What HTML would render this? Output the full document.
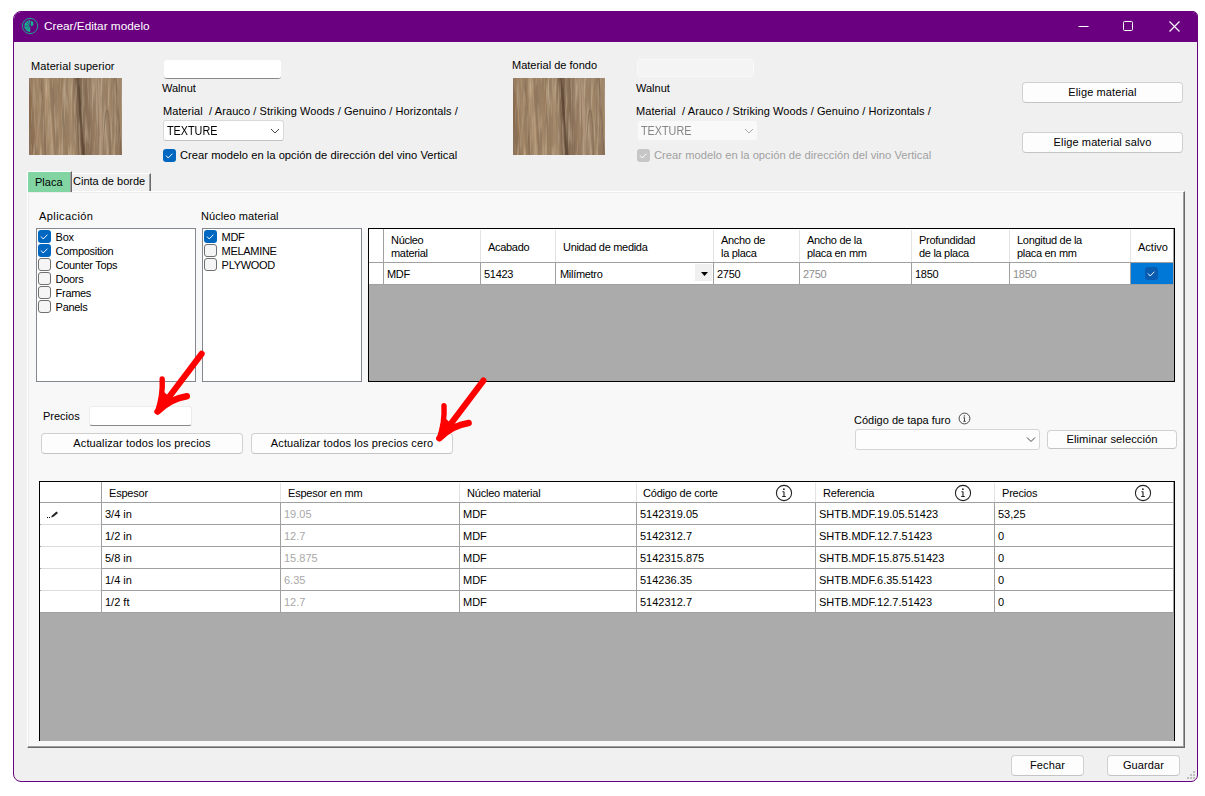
<!DOCTYPE html>
<html>
<head>
<meta charset="utf-8">
<title>Crear/Editar modelo</title>
<style>
*{box-sizing:border-box;margin:0;padding:0}
html,body{width:1205px;height:796px;overflow:hidden;background:#fff}
body{font-family:"Liberation Sans",sans-serif;font-size:11px;color:#000;position:relative}
.abs,.t,.btn,.cb,.grid,.cell,.hl,.vl{position:absolute}
.t{white-space:pre;line-height:13px;height:13px}
.g{color:#8e8e8e}
.dis{color:#a0a0a0}
.lst{letter-spacing:-.3px}
.grid .t{letter-spacing:-.3px}
.g2d .t{letter-spacing:-.2px}
.grid .t.d{letter-spacing:0}
.btn{letter-spacing:.12px}
.g2{color:#a8a8a8}
#win{position:absolute;left:13px;top:11px;width:1185px;height:771px;background:#f0f0f0;border:1px solid #6a0080;border-radius:8px 5px 7px 8px;overflow:hidden}
#title{position:absolute;left:0;top:0;width:1185px;height:30px;background:#6a0080}
#title .cap{position:absolute;left:30px;top:6px;font-size:11.8px;line-height:16px;color:#fff;white-space:pre}
.btn{background:#fdfdfd;border:1px solid #d0d0d0;border-bottom-color:#c4c4c4;border-radius:4px;text-align:center;white-space:pre;font-size:11px}
.cb{width:13px;height:13px;border-radius:3px}
.cb.on{background:#0067c0}
.cb.off{background:#f5f5f5;border:1px solid #707070}
.cb.dison{background:#c6c6c6}
.list{position:absolute;background:#fff;border:1px solid #828790}
.grid{background:#ababab;border:1px solid #000;overflow:hidden}
.cell{background:#fff}
.hl{height:1px;background:#a0a0a0}
.vl{width:1px;background:#a0a0a0}
.hvl{width:1px;background:#e3e3e3;position:absolute}
</style>
</head>
<body>
<svg width="0" height="0" style="position:absolute">
  <defs>
    <linearGradient id="wg" x1="-0.02" x2="0.98" y1="0" y2="0" gradientTransform="skewX(3.2)">
      <stop offset="0%" stop-color="#86664a"/>
      <stop offset="2.5%" stop-color="#8b6c4f"/>
      <stop offset="5%" stop-color="#9a7b5c"/>
      <stop offset="9%" stop-color="#a88a68"/>
      <stop offset="12.5%" stop-color="#9c7e5f"/>
      <stop offset="14.5%" stop-color="#856a50"/>
      <stop offset="16.5%" stop-color="#a08363"/>
      <stop offset="20%" stop-color="#ad9070"/>
      <stop offset="22.5%" stop-color="#b6997a"/>
      <stop offset="24.5%" stop-color="#957859"/>
      <stop offset="27%" stop-color="#8f7257"/>
      <stop offset="30%" stop-color="#a98c6b"/>
      <stop offset="33%" stop-color="#9e8162"/>
      <stop offset="37%" stop-color="#967a5c"/>
      <stop offset="41%" stop-color="#a3876a"/>
      <stop offset="45%" stop-color="#a78b6c"/>
      <stop offset="48.5%" stop-color="#957a5d"/>
      <stop offset="51%" stop-color="#846951"/>
      <stop offset="53.5%" stop-color="#6f5640"/>
      <stop offset="55.5%" stop-color="#634b38"/>
      <stop offset="57.5%" stop-color="#7a614a"/>
      <stop offset="60%" stop-color="#8b6f56"/>
      <stop offset="63%" stop-color="#806750"/>
      <stop offset="66%" stop-color="#94785d"/>
      <stop offset="70%" stop-color="#997d61"/>
      <stop offset="73%" stop-color="#a98e72"/>
      <stop offset="76.5%" stop-color="#b3987c"/>
      <stop offset="80%" stop-color="#a88d70"/>
      <stop offset="83%" stop-color="#9b8064"/>
      <stop offset="86.5%" stop-color="#a68b6d"/>
      <stop offset="90%" stop-color="#967b5f"/>
      <stop offset="93.5%" stop-color="#8f7459"/>
      <stop offset="95.5%" stop-color="#7f664e"/>
      <stop offset="97%" stop-color="#a58a6c"/>
      <stop offset="100%" stop-color="#a98e70"/>
    </linearGradient>
    <filter id="wf" x="0" y="0" width="100%" height="100%">
      <feTurbulence type="fractalNoise" baseFrequency="0.30 0.028" numOctaves="3" seed="7" result="n"/>
      <feColorMatrix in="n" type="matrix" values="0 0 0 0 0.27  0 0 0 0 0.19  0 0 0 0 0.12  1.6 0 0 0 -0.52"/>
    </filter>
    <filter id="wf2" x="0" y="0" width="100%" height="100%">
      <feTurbulence type="fractalNoise" baseFrequency="0.40 0.03" numOctaves="2" seed="21" result="n"/>
      <feColorMatrix in="n" type="matrix" values="0 0 0 0 0.80  0 0 0 0 0.68  0 0 0 0 0.50  0 1.2 0 0 -0.56"/>
    </filter>
    <symbol id="woodsym" viewBox="0 0 93 77" preserveAspectRatio="none">
      <rect width="93" height="77" fill="url(#wg)"/>
      <rect width="93" height="77" filter="url(#wf)"/>
      <rect width="93" height="77" filter="url(#wf2)"/>
      <path d="M48.5 0 C49.5 20 51 30 52 45 S53.5 68 54 77" stroke="#5a4433" stroke-width="2.2" fill="none" opacity=".55"/>
      <path d="M46.5 0 C47.5 25 49 40 50 77" stroke="#6a5340" stroke-width="1" fill="none" opacity=".4"/>
      <path d="M77.5 32 C75.5 42 74.5 58 75 77" stroke="#6f5945" stroke-width="1" fill="none" opacity=".55"/>
      <path d="M78.5 32 C80.5 42 81.5 58 81 77" stroke="#6f5945" stroke-width="1" fill="none" opacity=".45"/>
      <path d="M68.5 0 C69 25 69.5 50 70 77" stroke="#7a6350" stroke-width="1.2" fill="none" opacity=".4"/>
    </symbol>
  </defs>
</svg>
<div id="win">
  <div id="title">
    <svg class="abs" style="left:7px;top:5px" width="18" height="18" viewBox="0 0 18 18">
      <circle cx="9" cy="9" r="7.7" fill="#6a0080" stroke="#1ea28e" stroke-width="1"/>
      <path d="M9.2 9 L9.2 3 A6 6 0 0 0 9.2 15 Z" fill="#10b48f"/>
      <path d="M9.2 9 L4.6 4.4 M9.2 9 L3 9 M9.2 9 L4.8 13.6 M9.2 9 L7 3" stroke="#6a0080" stroke-width=".55" fill="none"/>
      <path d="M9.9 8.6 L9.9 3.8 L12.6 4.9 L11.8 6.2 L13 7.2 L11.8 7.8 L12.4 9 L10.8 8.6 L10.4 9.8 Z" fill="#10b48f"/>
    </svg>
    <div class="cap">Crear/Editar modelo</div>
    <svg class="abs" style="left:1060px;top:4px" width="115" height="22" viewBox="0 0 115 22">
      <path d="M4.5 10.5 H14.5" stroke="#fff" stroke-width="1" fill="none"/>
      <rect x="49.5" y="5.5" width="9" height="9" rx="1.2" fill="none" stroke="#fff" stroke-width="1"/>
      <path d="M95.5 5.5 L105.5 15.5 M105.5 5.5 L95.5 15.5" stroke="#fff" stroke-width="1.15" fill="none"/>
    </svg>
  </div>
  <div id="content" style="position:absolute;left:-14px;top:-12px;width:1205px;height:796px">
  <!-- top section -->
  <div class="t" style="left:31px;top:60px;letter-spacing:.1px">Material superior</div>
  <div class="wood abs" style="left:29px;top:78px;width:93px;height:77px"><svg width="93" height="77"><use href="#woodsym"/></svg></div>
  <div class="abs" style="left:164px;top:60px;width:117px;height:19px;background:#fff;border-radius:3px;border-bottom:1px solid #8a8a8a"></div>
  <div class="t" style="left:162px;top:82px">Walnut</div>
  <div class="t" style="left:163px;top:105px;letter-spacing:.085px">Material  / Arauco / Striking Woods / Genuino / Horizontals /</div>
  <div class="abs" style="left:163px;top:120px;width:121px;height:21px;background:#fff;border:1px solid #d9d9d9;border-bottom-color:#c2c2c2;border-radius:3px"></div>
  <div class="t" style="left:167px;top:125px;font-size:12px;transform:scaleX(.9);transform-origin:0 0">TEXTURE</div>
  <svg class="abs" style="left:270px;top:127px" width="10" height="8"><path d="M1 2 L5 6 L9 2" stroke="#444" stroke-width="1" fill="none"/></svg>
  <div class="cb on" style="left:163px;top:149px"><svg width="13" height="13"><path d="M3 6.5 L5.2 9 L9.4 4.7" stroke="#fff" stroke-width=".95" fill="none"/></svg></div>
  <div class="t" style="left:180px;top:149px;font-size:11.2px;letter-spacing:.02px">Crear modelo en la opción de dirección del vino Vertical</div>

  <div class="t" style="left:512px;top:59px">Material de fondo</div>
  <div class="wood abs" style="left:513px;top:78px;width:92px;height:77px"><svg width="92" height="77"><use href="#woodsym"/></svg></div>
  <div class="abs" style="left:637px;top:59px;width:117px;height:18px;background:#f4f4f4;border:1px solid #f9f9f9;border-radius:3px"></div>
  <div class="t" style="left:636px;top:82px">Walnut</div>
  <div class="t" style="left:636px;top:105px;letter-spacing:.085px">Material  / Arauco / Striking Woods / Genuino / Horizontals /</div>
  <div class="abs" style="left:637px;top:120px;width:121px;height:21px;background:#f9f9f9;border:1px solid #f1f1f1;border-radius:3px"></div>
  <div class="t dis" style="left:641px;top:125px;font-size:12px;transform:scaleX(.9);transform-origin:0 0;color:#868686">TEXTURE</div>
  <svg class="abs" style="left:744px;top:127px" width="10" height="8"><path d="M1 2 L5 6 L9 2" stroke="#aaa" stroke-width="1" fill="none"/></svg>
  <div class="cb dison" style="left:637px;top:149px"><svg width="13" height="13"><path d="M3 6.5 L5.2 9 L9.4 4.7" stroke="#fff" stroke-width=".95" fill="none"/></svg></div>
  <div class="t dis" style="left:654px;top:149px;font-size:11.2px;letter-spacing:.02px">Crear modelo en la opción de dirección del vino Vertical</div>

  <div class="btn" style="left:1022px;top:82px;width:161px;height:21px;line-height:19px">Elige material</div>
  <div class="btn" style="left:1022px;top:132px;width:161px;height:21px;line-height:19px">Elige material salvo</div>

  <!-- tabs -->
  <div class="abs" style="left:27px;top:191px;width:1158px;height:557px;background:#f8f8f8;border-top:1px solid #fff;border-left:1px solid #fff;border-right:1px solid #696969;border-bottom:1px solid #696969;box-shadow:inset -1px -1px 0 #a0a0a0,inset 1px 1px 0 #ececec"></div>
  <div class="abs" style="left:27px;top:171px;width:45px;height:21px;background:#82d5a2;border-top:1px solid #fff;border-left:1px solid #fff;border-right:1px solid #696969;box-shadow:inset -1px 0 0 #a0a0a0"></div>
  <div class="t" style="left:35px;top:176px">Placa</div>
  <div class="abs" style="left:72px;top:173px;width:79px;height:18px;background:#f0f0f0;border-right:1px solid #696969;border-top:1px solid #fff;box-shadow:inset -1px 0 0 #a0a0a0"></div>
  <div class="t" style="left:73px;top:175px">Cinta de borde</div>
  <!--MID-->
  <div class="t" style="left:39px;top:210px;letter-spacing:.42px">Aplicación</div>
  <div class="t" style="left:201px;top:210px;letter-spacing:.08px">Núcleo material</div>
  <div class="list" style="left:36px;top:228px;width:160px;height:154px"></div>
  <div class="list" style="left:202px;top:228px;width:160px;height:154px"></div>
  <div class="cb on" style="left:38px;top:230px"><svg width="13" height="13"><path d="M3 6.5 L5.2 9 L9.4 4.7" stroke="#fff" stroke-width=".95" fill="none"/></svg></div>
  <div class="t lst" style="left:55.6px;top:231px">Box</div>
  <div class="cb on" style="left:38px;top:244px"><svg width="13" height="13"><path d="M3 6.5 L5.2 9 L9.4 4.7" stroke="#fff" stroke-width=".95" fill="none"/></svg></div>
  <div class="t lst" style="left:55.6px;top:245px">Composition</div>
  <div class="cb off" style="left:38px;top:258px"></div>
  <div class="t lst" style="left:55.6px;top:259px">Counter Tops</div>
  <div class="cb off" style="left:38px;top:272px"></div>
  <div class="t lst" style="left:55.6px;top:273px">Doors</div>
  <div class="cb off" style="left:38px;top:286px"></div>
  <div class="t lst" style="left:55.6px;top:287px">Frames</div>
  <div class="cb off" style="left:38px;top:300px"></div>
  <div class="t lst" style="left:55.6px;top:301px">Panels</div>
  <div class="cb on" style="left:204px;top:230px"><svg width="13" height="13"><path d="M3 6.5 L5.2 9 L9.4 4.7" stroke="#fff" stroke-width=".95" fill="none"/></svg></div>
  <div class="t lst" style="left:221.6px;top:231px">MDF</div>
  <div class="cb off" style="left:204px;top:244px"></div>
  <div class="t lst" style="left:221.6px;top:245px">MELAMINE</div>
  <div class="cb off" style="left:204px;top:258px"></div>
  <div class="t lst" style="left:221.6px;top:259px">PLYWOOD</div>
  <div class="grid" style="left:368px;top:228px;width:807px;height:154px">
  <div class="cell" style="left:0;top:0;width:805px;height:56px"></div>
  <div class="hvl" style="left:14px;top:1px;height:32px;background:#a0a0a0;top:0;height:33px"></div>
  <div class="hvl" style="left:111px;top:1px;height:32px"></div>
  <div class="hvl" style="left:186px;top:1px;height:32px"></div>
  <div class="hvl" style="left:344px;top:1px;height:32px"></div>
  <div class="hvl" style="left:430px;top:1px;height:32px"></div>
  <div class="hvl" style="left:542px;top:1px;height:32px"></div>
  <div class="hvl" style="left:640px;top:1px;height:32px"></div>
  <div class="hvl" style="left:761px;top:1px;height:32px"></div>
  <div class="hl" style="left:0;top:33px;width:805px"></div>
  <div class="vl" style="left:14px;top:33px;height:23px"></div>
  <div class="vl" style="left:111px;top:33px;height:23px"></div>
  <div class="vl" style="left:186px;top:33px;height:23px"></div>
  <div class="vl" style="left:344px;top:33px;height:23px"></div>
  <div class="vl" style="left:430px;top:33px;height:23px"></div>
  <div class="vl" style="left:542px;top:33px;height:23px"></div>
  <div class="vl" style="left:640px;top:33px;height:23px"></div>
  <div class="vl" style="left:761px;top:33px;height:23px"></div>
  <div class="hl" style="left:0;top:55px;width:805px"></div>
  <div class="vl" style="left:804px;top:0;height:56px"></div>
  <div class="t " style="left:22px;top:5px">Núcleo</div>
  <div class="t " style="left:22px;top:18px">material</div>
  <div class="t " style="left:119px;top:12px">Acabado</div>
  <div class="t " style="left:194px;top:12px">Unidad de medida</div>
  <div class="t " style="left:352px;top:5px">Ancho de</div>
  <div class="t " style="left:352px;top:18px">la placa</div>
  <div class="t " style="left:438px;top:5px">Ancho de la</div>
  <div class="t " style="left:438px;top:18px">placa en mm</div>
  <div class="t " style="left:550px;top:5px">Profundidad</div>
  <div class="t " style="left:550px;top:18px">de la placa</div>
  <div class="t " style="left:648px;top:5px">Longitud de la</div>
  <div class="t " style="left:648px;top:18px">placa en mm</div>
  <div class="t" style="left:769px;top:12px;letter-spacing:0">Activo</div>
  <div class="t " style="left:18px;top:39px">MDF</div>
  <div class="t " style="left:115px;top:39px">51423</div>
  <div class="t " style="left:191px;top:39px">Milímetro</div>
  <div class="abs" style="left:326px;top:35px;width:17px;height:17px;background:#f0f0f0"></div>
  <svg class="abs" style="left:332px;top:43px" width="7" height="4"><path d="M0 0 H7 L3.5 4 Z" fill="#000"/></svg>
  <div class="t " style="left:348px;top:39px">2750</div>
  <div class="t g" style="left:434px;top:39px">2750</div>
  <div class="t " style="left:546px;top:39px">1850</div>
  <div class="t g" style="left:644px;top:39px">1850</div>
  <div class="abs" style="left:762px;top:34px;width:42px;height:21px;background:#0078d7"></div>
  <div class="cb" style="left:776px;top:38px;background:#0a5cb0"><svg width="13" height="13"><path d="M3 6.5 L5.2 9 L9.4 4.7" stroke="#fff" stroke-width=".95" fill="none"/></svg></div>
  </div>
  <div class="t" style="left:43px;top:410px">Precios</div>
  <div class="abs" style="left:89px;top:406px;width:103px;height:20px;background:#fff;border-radius:3px;border:1px solid #ececec;border-bottom:1px solid #8a8a8a"></div>
  <div class="btn" style="left:41px;top:433px;width:202px;height:21px;line-height:19px">Actualizar todos los precios</div>
  <div class="btn" style="left:251px;top:433px;width:202px;height:21px;line-height:19px">Actualizar todos los precios cero</div>
  <div class="t" style="left:854px;top:414px">Código de tapa furo</div>
  <svg class="abs" style="left:957.6px;top:412.4px" width="13" height="13" viewBox="0 0 13 13"><circle cx="6.5" cy="6.5" r="5.4" fill="none" stroke="#333" stroke-width="0.9"/><path d="M6.5 5.6 V9.2 M5.4 5.8 H6.5 M5.3 9.3 H7.7" stroke="#333" stroke-width="0.9" fill="none"/><circle cx="6.4" cy="3.9" r=".7" fill="#333"/></svg>
  <div class="abs" style="left:855px;top:429px;width:185px;height:21px;background:#fdfdfd;border:1px solid #d6d6d6;border-radius:3px"></div>
  <svg class="abs" style="left:1026px;top:436px" width="10" height="8"><path d="M1 1.5 L5 5.5 L9 1.5" stroke="#444" stroke-width="1" fill="none"/></svg>
  <div class="btn" style="left:1047px;top:430px;width:130px;height:19px;line-height:17px;font-size:11.2px;letter-spacing:.05px">Eliminar selección</div>
  <!--/MID-->
  <!--BOT-->
  <div class="grid g2d" style="left:39px;top:481px;width:1136px;height:260px;border-bottom:0">
  <div class="cell" style="left:0;top:0;width:1134px;height:131px"></div>
  <div class="hvl" style="left:61px;top:1px;height:19px;background:#a0a0a0;top:0;height:20px"></div>
  <div class="hvl" style="left:240px;top:1px;height:19px"></div>
  <div class="hvl" style="left:419px;top:1px;height:19px"></div>
  <div class="hvl" style="left:596px;top:1px;height:19px"></div>
  <div class="hvl" style="left:775px;top:1px;height:19px"></div>
  <div class="hvl" style="left:954px;top:1px;height:19px"></div>
  <div class="vl" style="left:61px;top:20px;height:111px"></div>
  <div class="vl" style="left:240px;top:20px;height:111px"></div>
  <div class="vl" style="left:419px;top:20px;height:111px"></div>
  <div class="vl" style="left:596px;top:20px;height:111px"></div>
  <div class="vl" style="left:775px;top:20px;height:111px"></div>
  <div class="vl" style="left:954px;top:20px;height:111px"></div>
  <div class="vl" style="left:1133px;top:0;height:131px"></div>
  <div class="hl" style="left:0;top:20px;width:1134px"></div>
  <div class="hl" style="left:0;top:42px;width:1134px"></div>
  <div class="hl" style="left:1px;top:42px;width:60px;background:#dcdcdc"></div>
  <div class="hl" style="left:0;top:64px;width:1134px"></div>
  <div class="hl" style="left:1px;top:64px;width:60px;background:#dcdcdc"></div>
  <div class="hl" style="left:0;top:86px;width:1134px"></div>
  <div class="hl" style="left:1px;top:86px;width:60px;background:#dcdcdc"></div>
  <div class="hl" style="left:0;top:108px;width:1134px"></div>
  <div class="hl" style="left:1px;top:108px;width:60px;background:#dcdcdc"></div>
  <div class="hl" style="left:0;top:130px;width:1134px"></div>
  <div class="t " style="left:69px;top:5px">Espesor</div>
  <div class="t " style="left:248px;top:5px">Espesor en mm</div>
  <div class="t " style="left:427px;top:5px">Núcleo material</div>
  <div class="t " style="left:603px;top:5px">Código de corte</div>
  <div class="t " style="left:783px;top:5px">Referencia</div>
  <div class="t " style="left:962px;top:5px">Precios</div>
  <svg class="abs" style="left:735px;top:2px" width="18" height="18" viewBox="0 0 18 18"><circle cx="9" cy="9" r="7.6" fill="none" stroke="#222" stroke-width="1.1"/><path d="M9 7.6 V12.4 M7.4 7.7 H9 M7.2 12.5 H10.8" stroke="#222" stroke-width="1.1" fill="none"/><circle cx="8.9" cy="5.2" r=".9" fill="#222"/></svg>
  <svg class="abs" style="left:914px;top:2px" width="18" height="18" viewBox="0 0 18 18"><circle cx="9" cy="9" r="7.6" fill="none" stroke="#222" stroke-width="1.1"/><path d="M9 7.6 V12.4 M7.4 7.7 H9 M7.2 12.5 H10.8" stroke="#222" stroke-width="1.1" fill="none"/><circle cx="8.9" cy="5.2" r=".9" fill="#222"/></svg>
  <svg class="abs" style="left:1094px;top:2px" width="18" height="18" viewBox="0 0 18 18"><circle cx="9" cy="9" r="7.6" fill="none" stroke="#222" stroke-width="1.1"/><path d="M9 7.6 V12.4 M7.4 7.7 H9 M7.2 12.5 H10.8" stroke="#222" stroke-width="1.1" fill="none"/><circle cx="8.9" cy="5.2" r=".9" fill="#222"/></svg>
  <div class="t d" style="left:65px;top:26px">3/4 in</div>
  <div class="t d g2" style="left:244px;top:26px">19.05</div>
  <div class="t d" style="left:423px;top:26px">MDF</div>
  <div class="t d" style="left:600px;top:26px">5142319.05</div>
  <div class="t d" style="left:779px;top:26px">SHTB.MDF.19.05.51423</div>
  <div class="t d" style="left:958px;top:26px">53,25</div>
  <div class="t d" style="left:65px;top:48px">1/2 in</div>
  <div class="t d g2" style="left:244px;top:48px">12.7</div>
  <div class="t d" style="left:423px;top:48px">MDF</div>
  <div class="t d" style="left:600px;top:48px">5142312.7</div>
  <div class="t d" style="left:779px;top:48px">SHTB.MDF.12.7.51423</div>
  <div class="t d" style="left:958px;top:48px">0</div>
  <div class="t d" style="left:65px;top:70px">5/8 in</div>
  <div class="t d g2" style="left:244px;top:70px">15.875</div>
  <div class="t d" style="left:423px;top:70px">MDF</div>
  <div class="t d" style="left:600px;top:70px">5142315.875</div>
  <div class="t d" style="left:779px;top:70px">SHTB.MDF.15.875.51423</div>
  <div class="t d" style="left:958px;top:70px">0</div>
  <div class="t d" style="left:65px;top:92px">1/4 in</div>
  <div class="t d g2" style="left:244px;top:92px">6.35</div>
  <div class="t d" style="left:423px;top:92px">MDF</div>
  <div class="t d" style="left:600px;top:92px">514236.35</div>
  <div class="t d" style="left:779px;top:92px">SHTB.MDF.6.35.51423</div>
  <div class="t d" style="left:958px;top:92px">0</div>
  <div class="t d" style="left:65px;top:114px">1/2 ft</div>
  <div class="t d g2" style="left:244px;top:114px">12.7</div>
  <div class="t d" style="left:423px;top:114px">MDF</div>
  <div class="t d" style="left:600px;top:114px">5142312.7</div>
  <div class="t d" style="left:779px;top:114px">SHTB.MDF.12.7.51423</div>
  <div class="t d" style="left:958px;top:114px">0</div>
  <svg class="abs" style="left:7px;top:28px" width="12" height="8" viewBox="0 0 12 8"><path d="M0 7.5 H1 M2 7.5 H3" stroke="#000" stroke-width="1"/><path d="M4 7.5 L5 5.5 L9.5 1.5 L11 3 L6.5 6.8 Z" fill="#222"/></svg>
  </div>
  <div class="btn" style="left:1011px;top:755px;width:73px;height:21px;line-height:19px">Fechar</div>
  <div class="btn" style="left:1107px;top:755px;width:73px;height:21px;line-height:19px">Guardar</div>
  <svg class="abs" style="left:1185px;top:769px" width="12" height="12"><rect x="8" y="2" width="2" height="2" fill="#bfbfbf"/><rect x="5" y="5" width="2" height="2" fill="#bfbfbf"/><rect x="8" y="5" width="2" height="2" fill="#bfbfbf"/><rect x="2" y="8" width="2" height="2" fill="#bfbfbf"/><rect x="5" y="8" width="2" height="2" fill="#bfbfbf"/><rect x="8" y="8" width="2" height="2" fill="#bfbfbf"/></svg>
  <svg class="abs" style="left:140px;top:340px" width="370" height="120" viewBox="140 340 370 120"><defs><g id="arw" fill="#ff0000" stroke="#ff0000" stroke-linecap="round" stroke-linejoin="round"><path d="M201.6 353.8 L163 405" stroke-width="6.2" fill="none"/><path d="M162.2 379 C162.8 390 160.8 402 157.6 411.5" stroke-width="5.4" fill="none"/><path d="M186.8 396.3 C176 397.8 165 404.2 157.6 411.5" stroke-width="6.5" fill="none"/><path d="M156.6 412.8 L161.5 391 L168 397 L177 398.5 Z" stroke-width="2"/></g></defs><use href="#arw"/><use href="#arw" transform="translate(281.8 26.75)"/></svg>
  <!--/BOT-->
  <!--CONTENT-->
  </div>
</div>
</body>
</html>
